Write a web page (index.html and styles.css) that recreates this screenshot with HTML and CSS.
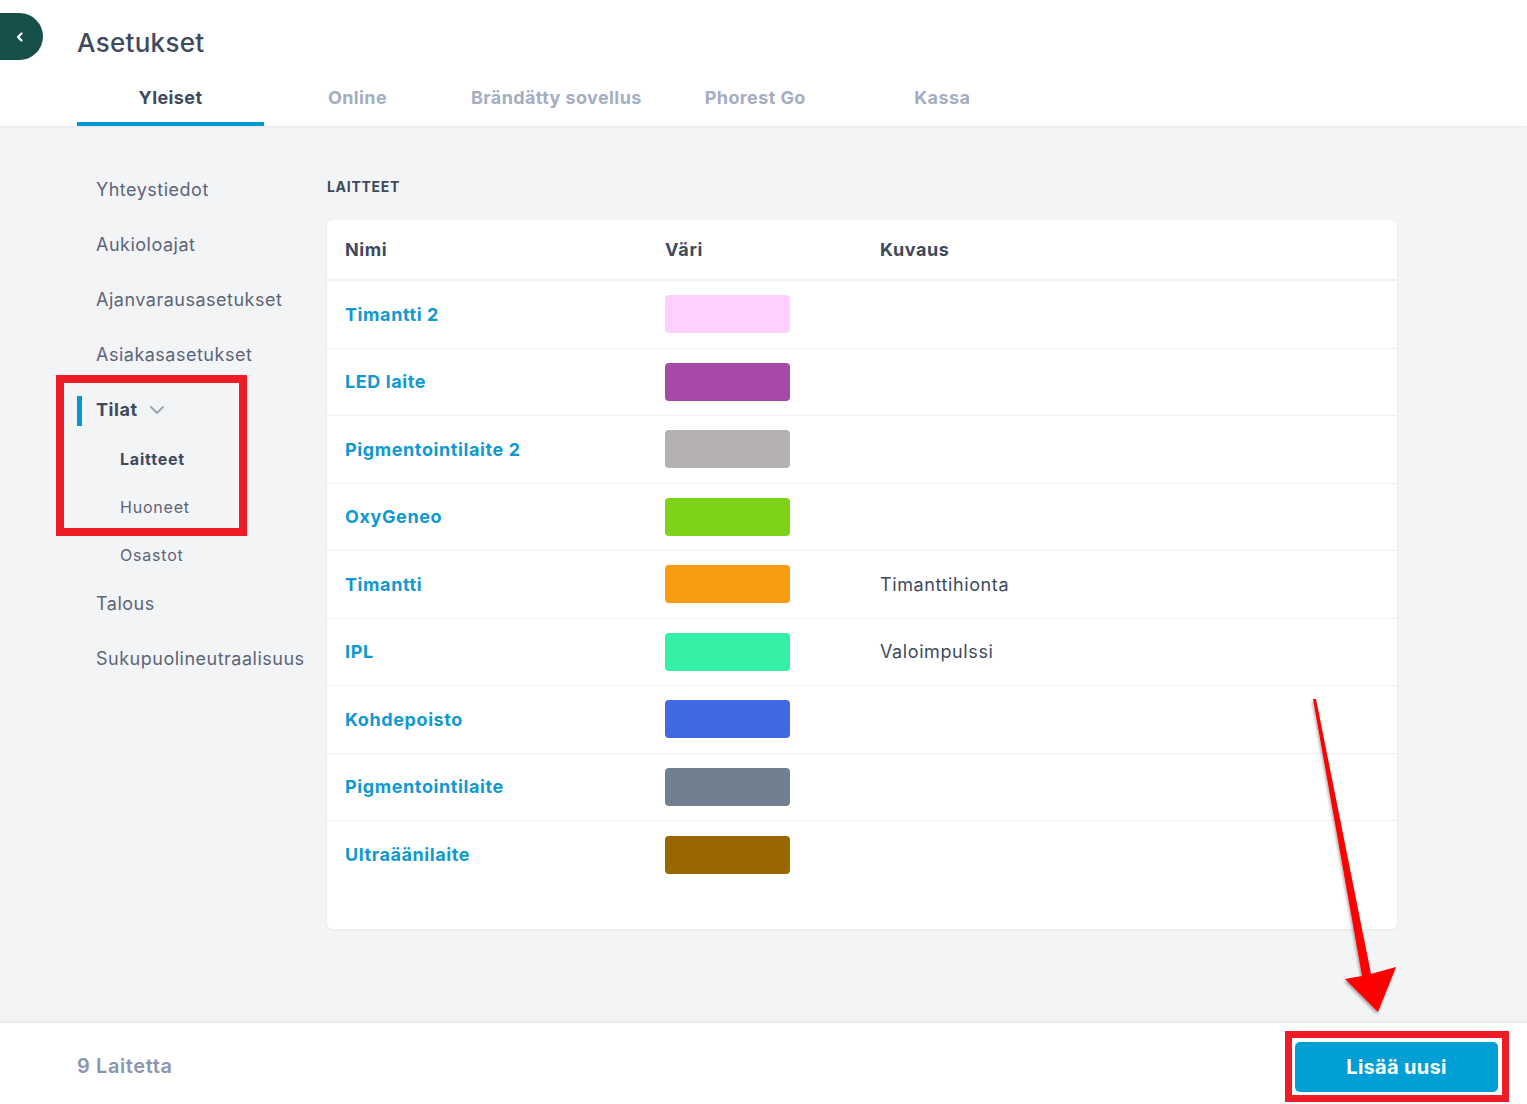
FILE: index.html
```html
<!DOCTYPE html>
<html lang="fi">
<head>
<meta charset="utf-8">
<title>Asetukset</title>
<link rel="stylesheet" href="styles.css">
</head>
<body>
<div class="app">
  <header class="topbar">
    <div class="title-row">
      <a class="back" href="#" aria-label="Takaisin">
        <svg width="12" height="12" viewBox="0 0 12 12"><path d="M7.5 2.5 L4 6 L7.5 9.5" fill="none" stroke="#fff" stroke-width="2.2" stroke-linecap="round" stroke-linejoin="round"/></svg>
      </a>
      <h1 class="title">Asetukset</h1>
    </div>
    <nav class="tabs">
      <a class="tab active" href="#">Yleiset</a>
      <a class="tab" href="#">Online</a>
      <a class="tab" href="#">Brändätty sovellus</a>
      <a class="tab" href="#">Phorest Go</a>
      <a class="tab" href="#">Kassa</a>
    </nav>
  </header>

  <main class="main">
    <aside class="sidebar">
      <a class="side-item" href="#">Yhteystiedot</a>
      <a class="side-item" href="#">Aukioloajat</a>
      <a class="side-item" href="#">Ajanvarausasetukset</a>
      <a class="side-item" href="#">Asiakasasetukset</a>
      <a class="side-item open" href="#">Tilat
        <svg class="chev" width="16" height="10" viewBox="0 0 16 10"><path d="M2 2 L8 8 L14 2" fill="none" stroke="#9aa5b8" stroke-width="2" stroke-linecap="round" stroke-linejoin="round"/></svg>
      </a>
      <div class="sub-list">
        <a class="sub-item current" href="#">Laitteet</a>
        <a class="sub-item" href="#">Huoneet</a>
        <a class="sub-item" href="#">Osastot</a>
      </div>
      <a class="side-item" href="#">Talous</a>
      <a class="side-item" href="#">Sukupuolineutraalisuus</a>
    </aside>

    <section class="content">
      <h2 class="section-title">LAITTEET</h2>
      <div class="card">
        <div class="row head">
          <div>Nimi</div><div>Väri</div><div>Kuvaus</div>
        </div>
        <div class="row"><a class="name" href="#">Timantti 2</a><div class="swatch" style="background:#ffd0fd"></div><div class="desc"></div></div>
        <div class="row"><a class="name" href="#">LED laite</a><div class="swatch" style="background:#a949a7"></div><div class="desc"></div></div>
        <div class="row"><a class="name" href="#">Pigmentointilaite 2</a><div class="swatch" style="background:#b5b0b3"></div><div class="desc"></div></div>
        <div class="row"><a class="name" href="#">OxyGeneo</a><div class="swatch" style="background:#7ed31a"></div><div class="desc"></div></div>
        <div class="row"><a class="name" href="#">Timantti</a><div class="swatch" style="background:#f99c14"></div><div class="desc">Timanttihionta</div></div>
        <div class="row"><a class="name" href="#">IPL</a><div class="swatch" style="background:#33f0a4"></div><div class="desc">Valoimpulssi</div></div>
        <div class="row"><a class="name" href="#">Kohdepoisto</a><div class="swatch" style="background:#4169e1"></div><div class="desc"></div></div>
        <div class="row"><a class="name" href="#">Pigmentointilaite</a><div class="swatch" style="background:#708090"></div><div class="desc"></div></div>
        <div class="row last"><a class="name" href="#">Ultraäänilaite</a><div class="swatch" style="background:#996600"></div><div class="desc"></div></div>
      </div>
    </section>
  </main>

  <footer class="footer">
    <span class="count">9 Laitetta</span>
    <button class="primary" type="button">Lisää uusi</button>
  </footer>
</div>

<div class="mark mark-nav"></div>
<div class="mark mark-btn"></div>
<svg class="arrow" width="1527" height="1104" viewBox="0 0 1527 1104">
  <defs>
    <filter id="sh" x="-20%" y="-20%" width="140%" height="140%">
      <feDropShadow dx="-1" dy="2" stdDeviation="1.5" flood-color="#000" flood-opacity="0.35"/>
    </filter>
  </defs>
  <polygon filter="url(#sh)" fill="#ff0000" points="1313,699 1316,699 1371,974 1396,967 1378,1012 1345,979 1362,976"/>
</svg>
</body>
</html>
```
FILE: styles.css
```css
* { box-sizing: border-box; }
html, body { margin: 0; padding: 0; }
body {
  font-family: Inter, "Open Sans", "Noto Sans", sans-serif;
  background: #f3f4f6;
  color: #3e4a5c;
}
a { text-decoration: none; color: inherit; }

.app {
  height: 1104px;
  display: flex;
  flex-direction: column;
}

.topbar {
  background: #fff;
  height: 126px;
  box-shadow: 0 1px 2px rgba(0,0,0,0.05);
  position: relative;
  z-index: 1;
}
.title-row {
  display: flex;
  align-items: center;
  padding-top: 13px;
  height: 60px;
}
.back {
  width: 43px;
  height: 47px;
  background: #17504a;
  border-radius: 0 24px 24px 0;
  display: flex;
  align-items: center;
  justify-content: flex-start;
  padding-left: 14px;
}
.title {
  margin: 11px 0 0 34px;
  font-size: 26px;
  font-weight: 500;
  color: #3f4a5d;
  letter-spacing: 0.3px;
}
.tabs {
  display: flex;
  margin-left: 77px;
  height: 66px;
}
.tab {
  min-width: 187px;
  padding: 27px 20px 0;
  text-align: center;
  font-size: 18px;
  font-weight: 700;
  line-height: 22px;
  letter-spacing: 0.4px;
  color: #a3aec2;
  border-bottom: 4px solid transparent;
}
.tab.active {
  color: #3e4a5c;
  border-bottom-color: #0299d3;
}

.main {
  flex: 1;
  display: flex;
  padding: 35px 0 0 77px;
}
.sidebar {
  width: 250px;
  display: flex;
  flex-direction: column;
  padding-top: 1px;
}
.side-item {
  display: flex;
  align-items: center;
  height: 55px;
  padding-left: 19px;
  font-size: 18px;
  letter-spacing: 0.5px;
  color: #5b6579;
}
.side-item.open {
  font-weight: 700;
  color: #3e4a5c;
  position: relative;
  letter-spacing: 0.6px;
}
.side-item.open::before {
  content: "";
  position: absolute;
  left: 0;
  top: 14px;
  width: 5px;
  height: 30px;
  background: #0299d3;
}
.chev { margin-left: 11px; }
.sub-list {
  display: flex;
  flex-direction: column;
  margin-top: -2px;
  margin-bottom: -3px;
}
.sub-item {
  display: flex;
  align-items: center;
  height: 48px;
  padding-left: 43px;
  font-size: 16px;
  letter-spacing: 0.8px;
  color: #5b6579;
}
.sub-item.current {
  font-weight: 700;
  color: #3e4a5c;
}

.content {
  width: 1070px;
}
.section-title {
  margin: 17px 0 0;
  font-size: 14px;
  font-weight: 700;
  color: #3e4a5c;
  line-height: 17px;
  letter-spacing: 0.7px;
}
.card {
  margin-top: 25px;
  background: #fff;
  border-radius: 6px;
  box-shadow: 0 1px 3px rgba(0,0,0,0.06);
  padding-bottom: 40px;
}
.row {
  display: grid;
  grid-template-columns: 320px 215px 1fr;
  align-items: center;
  height: 67.5px;
  padding-left: 18px;
  border-bottom: 1px solid #eef0f3;
}
.row.head {
  height: 61px;
  font-size: 18px;
  font-weight: 700;
  letter-spacing: 0.6px;
  color: #3e4a5c;
  border-bottom: 2px solid #eef0f3;
}
.row.last { border-bottom: none; }
.name {
  font-size: 18px;
  font-weight: 700;
  letter-spacing: 0.6px;
  color: #0f99d3;
}
.swatch {
  width: 125px;
  height: 38px;
  border-radius: 4px;
}
.desc {
  font-size: 18px;
  letter-spacing: 0.6px;
  color: #3e4a5c;
}

.footer {
  height: 81px;
  background: #fff;
  display: flex;
  align-items: center;
  justify-content: space-between;
  padding: 5px 29px 0 77px;
  box-shadow: 0 -1px 3px rgba(0,0,0,0.08);
  position: relative;
}
.count {
  font-size: 20px;
  font-weight: 600;
  letter-spacing: 0.6px;
  color: #8a97b0;
}
.primary {
  width: 203px;
  height: 50px;
  border: none;
  border-radius: 5px;
  background: #009fd6;
  color: #fff;
  font-family: inherit;
  font-size: 20px;
  font-weight: 700;
  letter-spacing: 0.3px;
  margin-top: 2px;
}

.mark {
  position: absolute;
  border: 8px solid #ee1c25;
  pointer-events: none;
}
.mark-nav { left: 56px; top: 375px; width: 191px; height: 161px; }
.mark-btn { left: 1285px; top: 1031px; width: 224px; height: 71px; border-width: 7px; }
.arrow { position: absolute; left: 0; top: 0; pointer-events: none; }
```
